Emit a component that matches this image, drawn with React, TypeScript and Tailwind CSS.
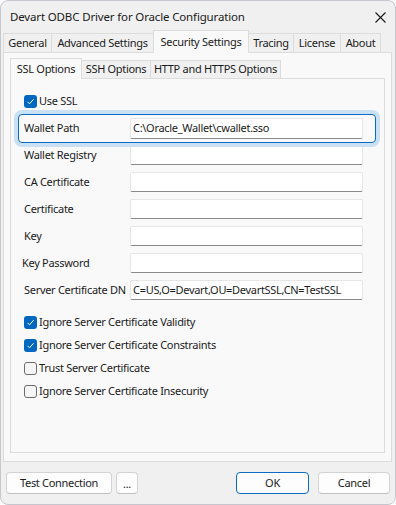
import React from "react";

const font = { fontFamily: "'Noto Sans', 'Liberation Sans', sans-serif" };

function CheckBox({ checked, label }: { checked: boolean; label: string }) {
  return (
    <div className="flex items-center h-[13px]">
      {checked ? (
        <span className="w-[13px] h-[13px] rounded-[3px] bg-[#0067c0] flex items-center justify-center">
          <svg width="9" height="9" viewBox="0 0 9 9">
            <path d="M1.5 4.8 L3.5 6.8 L7.6 2.2" fill="none" stroke="white" strokeWidth="1" />
          </svg>
        </span>
      ) : (
        <span className="w-[13px] h-[13px] rounded-[3px] border border-[#6b6b6b] bg-[#f6f6f6]" />
      )}
      <span className="ml-[2px] text-[11px] text-[#1b1b1b]">{label}</span>
    </div>
  );
}

function Field({ label, value, shift }: { label: string; value?: string; shift?: boolean }) {
  return (
    <div className="flex items-center h-[20px]">
      <span className={shift ? "w-[108px] -ml-[2px] text-[11px] text-[#1b1b1b]" : "w-[106px] text-[11px] text-[#1b1b1b]"}>{label}</span>
      <div className="w-[233px] h-[20px] bg-white border border-[#e6e6e6] border-b-[#8a8a8a] rounded-[2px] flex items-center pl-[2px] text-[11px] text-[#1b1b1b]">
        {value}
      </div>
    </div>
  );
}

export default function App() {
  const outerTabs = [
    { t: "General", w: "w-[49px]" },
    { t: "Advanced Settings", w: "w-[103px]" },
    { t: "Security Settings", w: "w-[96px]" },
    { t: "Tracing", w: "w-[46px]" },
    { t: "License", w: "w-[48px]" },
    { t: "About", w: "w-[41px]" },
  ];
  const innerTabs = [
    { t: "SSL Options", w: "w-[72px]" },
    { t: "SSH Options", w: "w-[70px]" },
    { t: "HTTP and HTTPS Options", w: "w-[131px]" },
  ];
  return (
    <div style={font} className="w-[396px] h-[505px] bg-[#f0f0f0] border border-[#c6c6ce] rounded-[8px] overflow-hidden flex flex-col whitespace-nowrap text-[11px] tracking-[-0.3px]">
      <div className="h-[30px] flex items-center justify-between pl-[9px] pr-[9px] shrink-0">
        <span className="text-[11.5px] tracking-[-0.15px] text-[#1a1a1a] mt-[2px]">Devart ODBC Driver for Oracle Configuration</span>
        <svg width="11" height="11" viewBox="0 0 11 11" className="mt-[2px]">
          <path d="M0.5 0.5 L10.5 10.5 M10.5 0.5 L0.5 10.5" stroke="#1a1a1a" strokeWidth="1.1" />
        </svg>
      </div>

      <div className="flex items-end h-[22px] ml-[2px] relative z-10 shrink-0">
        {outerTabs.map(({ t, w }) =>
          t === "Security Settings" ? (
            <div key={t} className={w + " -ml-px h-[23px] bg-[#f9f9f9] border border-b-0 border-[#dcdcdc] flex items-start justify-center pt-[3px] text-[11px] text-[#1b1b1b]"}>
              {t}
            </div>
          ) : (
            <div key={t} className={w + " h-[20px] bg-[#f0f0f0] border border-[#dcdcdc] -ml-px first:ml-0 flex items-center justify-center text-[11px] text-[#1b1b1b]"}>
              {t}
            </div>
          )
        )}
      </div>

      <div className="-mt-px ml-[2px] w-[389px] h-[410px] bg-[#f9f9f9] border border-[#dcdcdc] pl-[6px] pt-[5px] shrink-0">
        <div className="flex items-end h-[21px] relative z-10">
          {innerTabs.map(({ t, w }, i) =>
            i === 0 ? (
              <div key={t} className={w + " h-[21px] bg-[#f9f9f9] border border-b-0 border-[#dcdcdc] flex items-center justify-center text-[11px] text-[#1b1b1b]"}>
                {t}
              </div>
            ) : (
              <div key={t} className={w + " h-[19px] bg-[#f0f0f0] border border-[#dcdcdc] -ml-px flex items-center justify-center text-[11px] text-[#1b1b1b]"}>
                {t}
              </div>
            )
          )}
        </div>
        <div className="-mt-px w-[375px] h-[375px] bg-[#f9f9f9] border border-[#dcdcdc] flex flex-col">
          <div className="mt-[16px] ml-[13px]">
            <CheckBox checked label="Use SSL" />
          </div>

          <div className="relative z-10 mt-[6px] ml-[7px] w-[358px] h-[29px] border border-[#0a6cc2] rounded-[4px] ring-[4px] ring-[#c9e0f5] bg-[#f9f9f9] flex items-center pl-[5px]">
            <span className="w-[106px] text-[11px] text-[#1b1b1b]">Wallet Path</span>
            <div className="w-[233px] h-[21px] bg-white border border-[#e6e6e6] border-b-[#8a8a8a] rounded-[2px] flex items-center pl-[2px] text-[11px] text-[#1b1b1b]">
              C:\Oracle_Wallet\cwallet.sso
            </div>
          </div>

          <div className="mt-[2px] ml-[13px] flex flex-col gap-[7px]">
            <Field label="Wallet Registry" />
            <Field label="CA Certificate" />
            <Field label="Certificate" />
            <Field label="Key" />
            <Field label="Key Password" shift />
            <Field label="Server Certificate DN" value="C=US,O=Devart,OU=DevartSSL,CN=TestSSL" />
          </div>

          <div className="mt-[16px] ml-[13px] flex flex-col gap-[10px]">
            <CheckBox checked label="Ignore Server Certificate Validity" />
            <CheckBox checked label="Ignore Server Certificate Constraints" />
            <CheckBox checked={false} label="Trust Server Certificate" />
            <CheckBox checked={false} label="Ignore Server Certificate Insecurity" />
          </div>
        </div>
      </div>

      <div className="mt-[10px] mx-[5px] flex justify-between h-[22px] shrink-0">
        <div className="flex gap-[4px]">
          <button className="w-[106px] h-[22px] bg-[#fdfdfd] border border-[#d3d3d3] border-b-[#c0c0c0] rounded-[4px] text-[11px] text-[#1b1b1b]">Test Connection</button>
          <button className="w-[22px] h-[22px] bg-[#fdfdfd] border border-[#d3d3d3] border-b-[#c0c0c0] rounded-[4px] text-[11px] text-[#1b1b1b] leading-none">...</button>
        </div>
        <div className="flex gap-[9px]">
          <button className="w-[73px] h-[22px] bg-[#fdfdfd] border border-[#0a6cc2] rounded-[4px] text-[11px] text-[#1b1b1b]">OK</button>
          <button className="w-[72px] h-[22px] bg-[#fdfdfd] border border-[#d3d3d3] border-b-[#c0c0c0] rounded-[4px] text-[11px] text-[#1b1b1b]">Cancel</button>
        </div>
      </div>
    </div>
  );
}
